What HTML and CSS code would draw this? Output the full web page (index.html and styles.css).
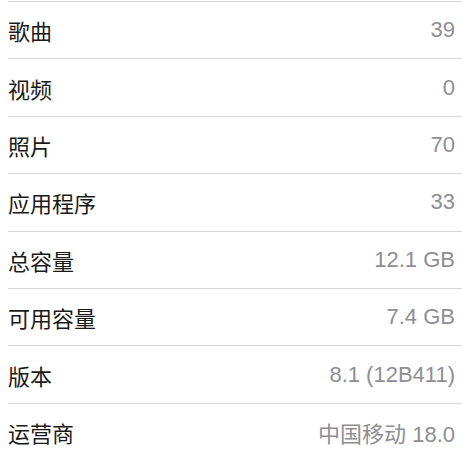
FILE: index.html
```html
<!doctype html>
<html lang="zh-CN">
  <head>
    <meta charset="UTF-8" />
    <meta name="viewport" content="width=device-width, initial-scale=1.0" />
    <title>关于本机</title>
    <link rel="stylesheet" href="styles.css">
  </head>
  <body>
    <ul class="info-list">
      <li class="row"><span class="label">歌曲</span><span class="value">39</span></li>
      <li class="row"><span class="label">视频</span><span class="value">0</span></li>
      <li class="row"><span class="label">照片</span><span class="value">70</span></li>
      <li class="row"><span class="label">应用程序</span><span class="value">33</span></li>
      <li class="row"><span class="label">总容量</span><span class="value">12.1 GB</span></li>
      <li class="row"><span class="label">可用容量</span><span class="value">7.4 GB</span></li>
      <li class="row"><span class="label">版本</span><span class="value">8.1 (12B411)</span></li>
      <li class="row"><span class="label">运营商</span><span class="value">中国移动 18.0</span></li>
    </ul>
  </body>
</html>
```

FILE: styles.css
```css
* {
  margin: 0;
  padding: 0;
  box-sizing: border-box;
}

body {
  font-family: 'Liberation Sans', 'Noto Sans CJK SC', sans-serif;
  background: #fff;
  color: #1a1a1a;
  padding-top: 1px;
}

.info-list {
  list-style: none;
  margin-left: 8px;
  border-top: 1px solid #d6d5da;
}

.row {
  display: flex;
  align-items: center;
  justify-content: space-between;
  height: 57.4px;
  padding-right: 7px;
  border-bottom: 1px solid #d6d5da;
  font-size: 22px;
}

.label {
  font-family: 'Noto Sans CJK SC', sans-serif;
  font-weight: 400;
}

.value {
  color: #8e8e93;
}
```
